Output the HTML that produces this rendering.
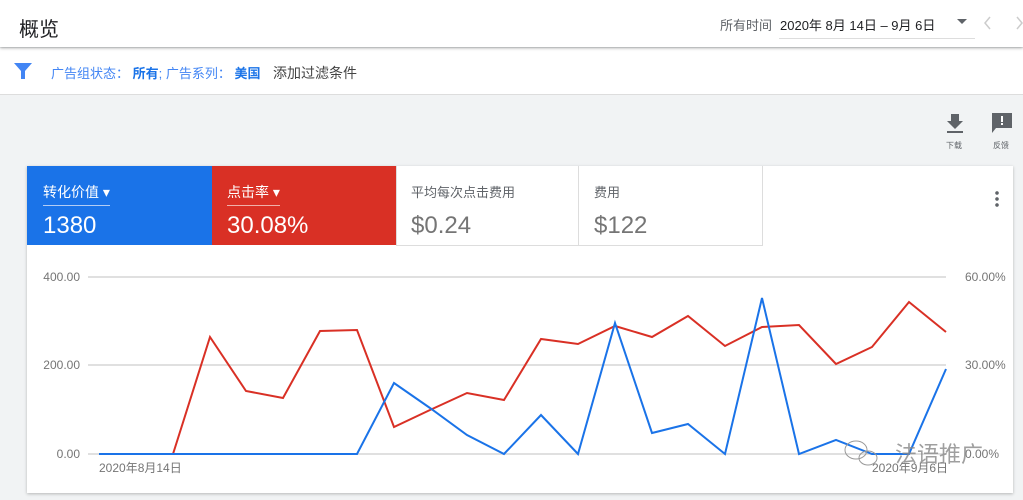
<!DOCTYPE html>
<html><head><meta charset="utf-8"><style>
*{margin:0;padding:0;box-sizing:border-box}
body{width:1023px;height:500px;overflow:hidden;background:#f1f3f4;font-family:"Liberation Sans","Noto Sans CJK SC",sans-serif;position:relative}
.top{position:absolute;left:0;top:0;width:1023px;height:47px;background:#fff;box-shadow:0 1px 3px rgba(0,0,0,.35);z-index:2}
.filt{position:absolute;left:0;top:48px;width:1023px;height:47px;background:#fff;border-bottom:1px solid #ddd}
.a{position:absolute;white-space:nowrap}
.card{position:absolute;left:27px;top:166px;width:986px;height:327px;background:#fff;box-shadow:0 1px 3px rgba(0,0,0,.25)}
</style></head><body>
<div class="top">
<div class="a" style="left:19px;top:13px;font-size:20px;color:#202124">概览</div>
<div class="a" style="left:720px;top:15px;font-size:13px;color:#5f6368">所有时间</div>
<div class="a" style="left:780px;top:15px;font-size:13px;color:#202124">2020年 8月 14日 – 9月 6日</div>
<div class="a" style="left:779px;top:38px;width:196px;height:1px;background:#ddd"></div>
<div class="a" style="left:957px;top:19px;width:0;height:0;border-left:5px solid transparent;border-right:5px solid transparent;border-top:5px solid #5f6368"></div>
<svg class="a" style="left:983px;top:16px" width="10" height="14"><path d="M7 1L2 7l5 6" fill="none" stroke="#ccc" stroke-width="1.5"/></svg>
<svg class="a" style="left:1015px;top:16px" width="10" height="14"><path d="M2 1l5 6-5 6" fill="none" stroke="#ccc" stroke-width="1.5"/></svg>
</div>
<div class="filt">
<svg class="a" style="left:14px;top:14px" width="18" height="18" viewBox="0 0 18 18"><path d="M0 1h18l-7 8v8h-4v-8z" fill="#4285f4"/></svg>
<div class="a" style="left:51px;top:15px;font-size:13px;color:#4285f4">广告组状态： <b style="color:#1a73e8">所有</b>; 广告系列： <b style="color:#1a73e8">美国</b></div>
<div class="a" style="left:273px;top:15px;font-size:14px;color:#444">添加过滤条件</div>
</div>
<svg class="a" style="left:946px;top:114px" width="18" height="20"><path d="M5 0h8v7h4l-8 8-8-8h4z" fill="#5f6368"/><rect x="1" y="17" width="16" height="2" fill="#5f6368"/></svg>
<div class="a" style="left:946px;top:140px;font-size:8px;color:#5f6368">下载</div>
<svg class="a" style="left:992px;top:113px" width="20" height="20"><path d="M0 0h20v15h-16l-4 5z" fill="#5f6368"/><rect x="9" y="3" width="2" height="6" fill="#fff"/><rect x="9" y="10" width="2" height="2" fill="#fff"/></svg>
<div class="a" style="left:993px;top:140px;font-size:8px;color:#5f6368">反馈</div>
<div class="card">
<div class="a" style="left:0;top:0;width:185px;height:79px;background:#1a73e8"></div>
<div class="a" style="left:185px;top:0;width:184px;height:79px;background:#d93025"></div>
<div class="a" style="left:369px;top:0;width:1px;height:79px;background:#ddd"></div>
<div class="a" style="left:551px;top:0;width:1px;height:79px;background:#ddd"></div>
<div class="a" style="left:735px;top:0;width:1px;height:79px;background:#ddd"></div>
<div class="a" style="left:369px;top:79px;width:367px;height:1px;background:#ddd"></div>
<div class="a" style="left:16px;top:16px;font-size:14px;color:#fff;border-bottom:1px solid #b3cdf5;padding-bottom:3px">转化价值 ▾</div>
<div class="a" style="left:16px;top:46px;font-size:24px;color:#fff">1380</div>
<div class="a" style="left:200px;top:16px;font-size:14px;color:#fff;border-bottom:1px solid #f0b0aa;padding-bottom:3px">点击率 ▾</div>
<div class="a" style="left:200px;top:46px;font-size:24px;color:#fff">30.08%</div>
<div class="a" style="left:384px;top:16px;font-size:13px;color:#5f6368">平均每次点击费用</div>
<div class="a" style="left:384px;top:46px;font-size:24px;color:#757575">$0.24</div>
<div class="a" style="left:567px;top:16px;font-size:13px;color:#5f6368">费用</div>
<div class="a" style="left:567px;top:46px;font-size:24px;color:#757575">$122</div>
<div class="a" style="left:968px;top:24px;width:4px;height:18px;background:radial-gradient(circle,#5f6368 1.6px,transparent 2px) 0 0/4px 6px"></div>
</div>
<svg class="a" style="left:0;top:0" width="1023" height="500">
<g stroke="#e0e0e0" stroke-width="2"><line x1="88" y1="277" x2="946" y2="277"/><line x1="88" y1="365" x2="946" y2="365"/><line x1="88" y1="454" x2="946" y2="454"/></g>
<g font-family="Liberation Sans,sans-serif" font-size="12" fill="#757575">
<text x="80" y="281" text-anchor="end">400.00</text><text x="80" y="369" text-anchor="end">200.00</text><text x="80" y="458" text-anchor="end">0.00</text>
<text x="965" y="281">60.00%</text><text x="965" y="369">30.00%</text><text x="965" y="458">0.00%</text>
<text x="99" y="472" font-family="Liberation Sans,Noto Sans CJK SC,sans-serif">2020年8月14日</text><text x="872" y="472" font-family="Liberation Sans,Noto Sans CJK SC,sans-serif">2020年9月6日</text></g>
<polyline fill="none" stroke="#d93025" stroke-width="2" points="99,454 136,454 173,454 210,337 246,391 283,398 320,331 357,330 394,427 430,410 467,393 504,400 541,339 578,344 615,326 652,337 688,316 725,346 762,327 799,325 836,364 872,347 909,302 946,332"/>
<polyline fill="none" stroke="#1a73e8" stroke-width="2" points="99,454 136,454 173,454 210,454 246,454 283,454 320,454 357,454 394,383 430,408 467,435 504,454 541,415 578,454 615,323 652,433 688,424 725,454 762,298 799,454 836,440 872,454 909,454 946,369"/>
<g fill="none" stroke="#999" stroke-width="1"><ellipse cx="856" cy="450" rx="11" ry="9"/><ellipse cx="868" cy="458" rx="9" ry="7"/></g>
<text x="895" y="462" font-family="Liberation Sans,Noto Sans CJK SC,sans-serif" font-size="22" fill="#888" opacity=".8">法语推广</text>
</svg>
</body></html>
